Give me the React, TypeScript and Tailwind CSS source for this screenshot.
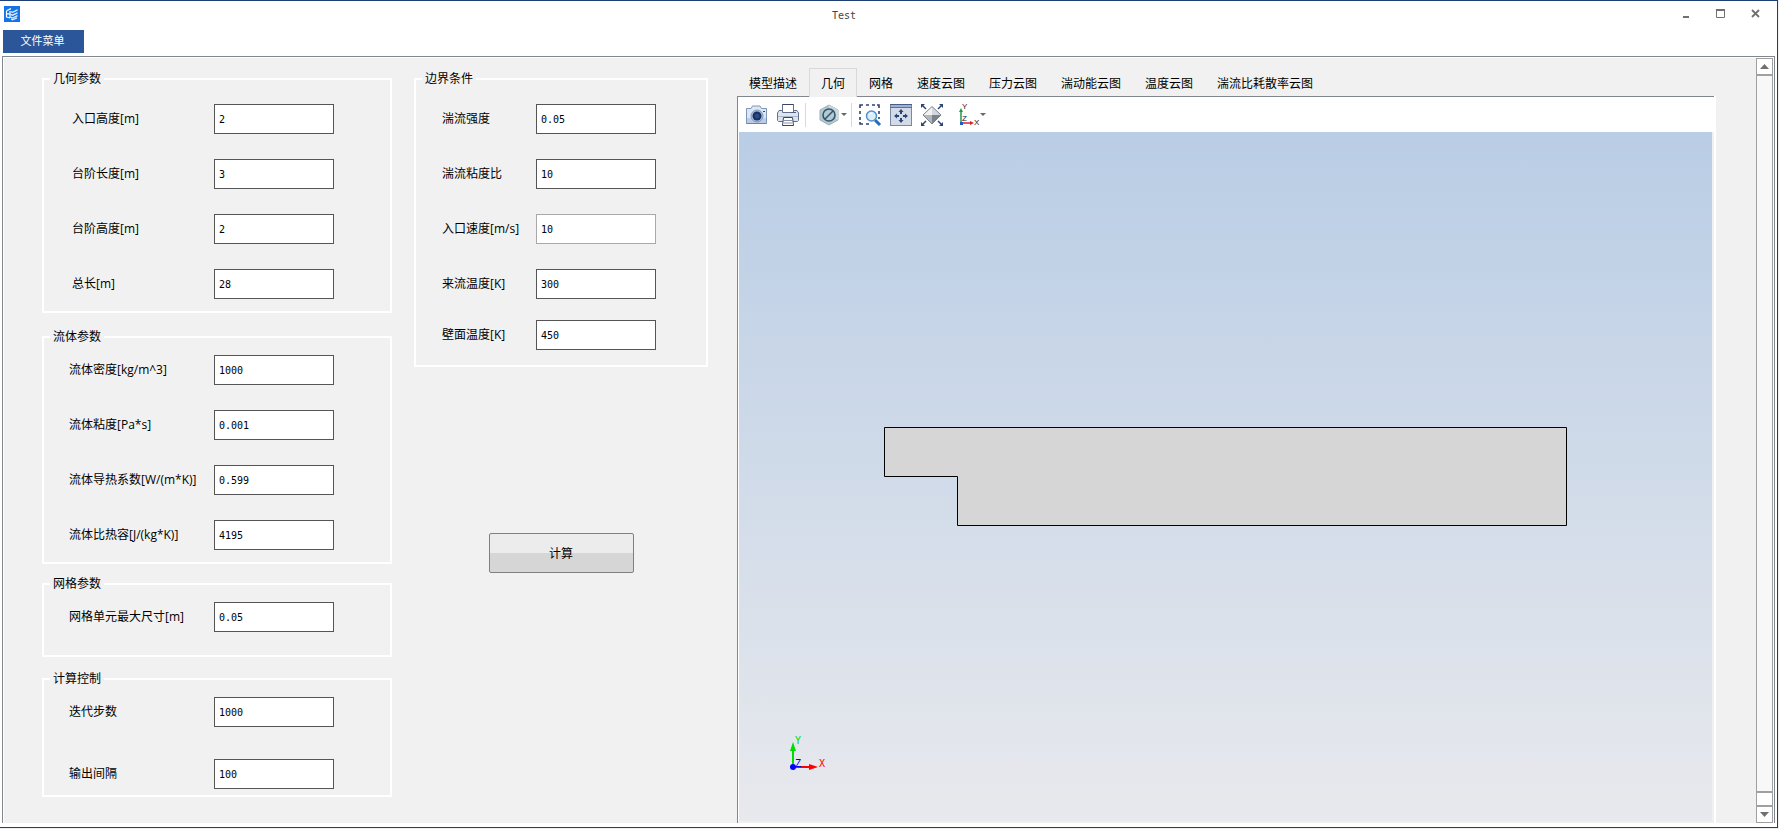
import { useState } from 'react';
import clsx from 'clsx';

type Field = { id: string; label: string; value: string; readOnly?: boolean };

const geometry: Field[] = [
  { id: 'inlet-height', label: '入口高度[m]', value: '2' },
  { id: 'step-length', label: '台阶长度[m]', value: '3' },
  { id: 'step-height', label: '台阶高度[m]', value: '2' },
  { id: 'total-length', label: '总长[m]', value: '28' },
];

const fluid: Field[] = [
  { id: 'density', label: '流体密度[kg/m^3]', value: '1000' },
  { id: 'viscosity', label: '流体粘度[Pa*s]', value: '0.001' },
  { id: 'conductivity', label: '流体导热系数[W/(m*K)]', value: '0.599' },
  { id: 'heat-capacity', label: '流体比热容[J/(kg*K)]', value: '4195' },
];

const mesh: Field[] = [{ id: 'mesh-size', label: '网格单元最大尺寸[m]', value: '0.05' }];

const control: Field[] = [
  { id: 'iterations', label: '迭代步数', value: '1000' },
  { id: 'interval', label: '输出间隔', value: '100' },
];

const flow: Field[] = [
  { id: 'intensity', label: '湍流强度', value: '0.05' },
  { id: 'viscosity-ratio', label: '湍流粘度比', value: '10' },
  { id: 'inlet-speed', label: '入口速度[m/s]', value: '10', readOnly: true },
  { id: 'inflow-temp', label: '来流温度[K]', value: '300' },
];

const wall: Field[] = [{ id: 'wall-temp', label: '壁面温度[K]', value: '450' }];

const tabs = ['模型描述', '几何', '网格', '速度云图', '压力云图', '湍动能云图', '温度云图', '湍流比耗散率云图'];

function Rows({ fields, className }: { fields: Field[]; className?: string }) {
  return (
    <div className={clsx('flex flex-col', className)}>
      {fields.map((f) => (
        <div key={f.id} className="flex items-center">
          <label htmlFor={f.id} className="flex-1 whitespace-nowrap">
            {f.label}
          </label>
          <input
            id={f.id}
            type="text"
            defaultValue={f.value}
            readOnly={f.readOnly}
            className={clsx(
              'h-[30px] w-[120px] border bg-white px-1 font-["DejaVu_Sans_Mono",monospace] text-[10px] outline-none',
              f.readOnly ? 'border-[#a9a9a9]' : 'border-[#555555]'
            )}
          />
        </div>
      ))}
    </div>
  );
}

type GroupProps = { title: string; className?: string; bodyClassName?: string; children: React.ReactNode };

function Group({ title, className, bodyClassName, children }: GroupProps) {
  return (
    <fieldset className={clsx('border-2 border-white', className)}>
      <legend className="ml-1.5 px-[3px] leading-4">{title}</legend>
      <div className={bodyClassName}>{children}</div>
    </fieldset>
  );
}

function AppLogo() {
  return (
    <svg width="16" height="16" viewBox="0 0 16 16" fill="none">
      <rect width="16" height="16" fill="#1473e6" />
      <path d="M2.5 5v6.5M2.5 4.8 7 2.6M2.5 7.8h3.5M2.5 11l3.5 1M6 5v7" stroke="#fff" strokeWidth="1.2" />
      <path d="M6.5 5.6 8.5 6.3 13.5 3.9M6.5 8.4l2 .8 5-2.4M6.5 11.2l2 .8 5-2.4M7 13l1.5.8 4.5-2" stroke="#dcebff" strokeWidth="1.3" />
    </svg>
  );
}

function CameraIcon() {
  return (
    <svg width="24" height="24" viewBox="0 0 24 24">
      <path d="M1.5 5.5H6L7.5 3H15l1.5 2.5h5v15h-20z" fill="#dbe7f5" stroke="#7f95b8" strokeLinejoin="round" />
      <path d="M2 15h19v5H2z" fill="#b9cde8" />
      <path d="M1.5 20.5h20" stroke="#6c84ab" />
      <circle cx="12" cy="13" r="6" fill="#aebfda" stroke="#8296b8" />
      <circle cx="12" cy="13" r="4.5" fill="#172f63" />
      <circle cx="12" cy="13" r="2.5" fill="#294a82" />
      <rect x="18" y="8" width="2" height="1" fill="#2f4a78" />
    </svg>
  );
}

function PrinterIcon() {
  return (
    <svg width="24" height="24" viewBox="0 0 24 24" stroke="#62718c">
      <path d="M6.5 9V1.5h11V9" fill="#fff" />
      <path d="M6.5 1.5h11" stroke="#354664" />
      <path d="M1.5 10 3 7.500h3.500v2h11v-2H21l1.500 2.500v7.500l-1 1h-19l-1-1z" fill="#dfe5ef" />
      <path d="M2 13.5h20" stroke="#aab5c8" />
      <path d="M15 9.5h5" stroke="#4f6080" />
      <path d="M7.5 14.5h9l1 8h-11z" fill="#fff" stroke="#354664" />
      <path d="M8 17.5h8M8 20h8" stroke="#8592a9" />
    </svg>
  );
}

function HiddenIcon() {
  return (
    <svg width="20" height="24" viewBox="0 0 20 24">
      <path d="m10 2 9 5v10l-9 5-9-5V7z" fill="#b4c8cd" stroke="#9ab1b9" />
      <path d="m10 2 9 5v10l-9-5z" fill="#cbd9dd" />
      <circle cx="10" cy="12" r="6" fill="#b3cad2" stroke="#34566f" strokeWidth="1.6" />
      <path d="m6 16 8-8" stroke="#34566f" strokeWidth="1.6" />
    </svg>
  );
}

function ZoomBoxIcon() {
  return (
    <svg width="24" height="24" viewBox="0 0 24 24" fill="none">
      <path d="M2 5V2h3M8 2h3M14 2h3M19 2h2v3M21 8v3M21 14v2M2 8v3M2 14v3M2 19v2h3M8 21h3" stroke="#2b4474" strokeWidth="1.6" />
      <path d="m17 17 5 5" stroke="#1f6fc0" strokeWidth="3" />
      <circle cx="13.5" cy="13" r="5" fill="#d9effc" stroke="#5590c8" strokeWidth="1.5" />
      <path d="M11 12a3 3 0 0 1 3-2" stroke="#fff" />
    </svg>
  );
}

function FitIcon() {
  return (
    <svg width="24" height="24" viewBox="0 0 24 24">
      <rect x="1.5" y="1.5" width="21" height="21" fill="#d3dbe9" stroke="#7a88a3" />
      <path d="M1 1h22v1H1z" fill="#465d88" />
      <path d="M2 2h20v2H2z" fill="#9fb2d3" />
      <path d="M1 4h22v1H1z" fill="#5c7098" />
      <path
        d="m12 6 2.500 3H13v2h-2V9H9.500zM12 20l2.500-3H13v-2h-2v2H9.500zM5 13l3-2.500V12h2v2H8v1.500zM19 13l-3-2.500V12h-2v2h2v1.500z"
        fill="#2b4474"
      />
    </svg>
  );
}

function ExtentsIcon() {
  return (
    <svg width="24" height="24" viewBox="0 0 24 24">
      <path d="M12 3.500V12H3z" fill="#f2f2f2" />
      <path d="M12 3.500V12h9z" fill="#d4d7db" />
      <path d="M12 12v9l-9-9z" fill="#b3b7bd" />
      <path d="M12 12v9l9-9z" fill="#7d838c" />
      <path d="m12 3.500 9 8.500-9 9-9-9z" fill="none" stroke="#7b828c" />
      <path d="m2 2 4 4M22 2l-4 4M2 22l4-4M22 22l-4-4" stroke="#2b4474" strokeWidth="1.5" />
      <path d="M1 1h4L1 5zM23 1v4l-4-4zM1 23v-4l4 4zM23 23h-4l4-4z" fill="#2b4474" />
    </svg>
  );
}

function AxesIcon() {
  return (
    <svg width="24" height="24" viewBox="0 0 24 24" fontSize="8" fontFamily="Liberation Sans, sans-serif">
      <path d="M5 20V8" stroke="#1f9a4b" strokeWidth="1.5" />
      <path d="m5 5 2 4H3z" fill="#1f9a4b" />
      <path d="M5 20h10" stroke="#e0202a" strokeWidth="1.5" />
      <path d="m18 20-4-2v4z" fill="#e0202a" />
      <rect x="4" y="19" width="3" height="3" fill="#2456c8" />
      <text x="6" y="6" fill="#222">Y</text>
      <text x="6" y="18" fill="#222">Z</text>
      <text x="18" y="22" fill="#222">X</text>
    </svg>
  );
}

function Caret() {
  return (
    <svg width="6" height="4" viewBox="0 0 6 4">
      <path d="M0 0h6L3 3z" fill="#666" />
    </svg>
  );
}

function Toolbar() {
  return (
    <div className="flex h-[35px] items-center pl-[7px]">
      <button aria-label="截图">
        <CameraIcon />
      </button>
      <button aria-label="打印" className="ml-[7px]">
        <PrinterIcon />
      </button>
      <span className="ml-[5px] h-6 w-px bg-[#d9d9d9]" />
      <button aria-label="隐藏" className="ml-[13px] flex items-center gap-0.5">
        <HiddenIcon />
        <Caret />
      </button>
      <span className="ml-1 h-6 w-px bg-[#d9d9d9]" />
      <button aria-label="框选缩放" className="ml-1.5">
        <ZoomBoxIcon />
      </button>
      <button aria-label="适应窗口" className="ml-[7px]">
        <FitIcon />
      </button>
      <button aria-label="缩放到全部" className="ml-[7px]">
        <ExtentsIcon />
      </button>
      <button aria-label="视图方向" className="ml-3 flex items-center">
        <AxesIcon />
        <Caret />
      </button>
    </div>
  );
}

function Viewport() {
  return (
    <div className="relative flex-1 bg-linear-to-b from-[#b9cde5] to-[#e8e9ed]">
      <svg className="absolute inset-0 h-full w-full" viewBox="0 0 973 689">
        <path d="M145.5 295.5H827.5V393.5H218.5V344.5H145.5z" fill="#d6d6d6" stroke="#000" />
        <g fontSize="10" fontFamily="DejaVu Sans Mono, monospace">
          <path d="M54 635V616" stroke="#00dc00" strokeWidth="2" />
          <path d="m54 610 3 9h-6z" fill="#00dc00" />
          <path d="M54 635h20" stroke="#f00" strokeWidth="2" />
          <path d="m79 635-9-3v6z" fill="#f00" />
          <circle cx="54" cy="635" r="3" fill="#00f" />
          <text x="56" y="612" fill="#00dc00">Y</text>
          <text x="56" y="635" fill="#00f">Z</text>
          <text x="80" y="635" fill="#f00">X</text>
        </g>
      </svg>
    </div>
  );
}

function Scrollbar() {
  return (
    <div className="flex w-[17px] flex-col border border-[#a0a0a0] bg-[#f8f8f8]">
      <button aria-label="向上滚动" className="flex h-[17px] items-center justify-center border-b-2 border-[#a0a0a0] bg-white">
        <svg width="9" height="5" viewBox="0 0 9 5">
          <path d="M4.5 0 9 5H0z" fill="#707070" />
        </svg>
      </button>
      <div className="flex-1" />
      <div className="h-4 border-y-2 border-[#a0a0a0] bg-white" />
      <button aria-label="向下滚动" className="flex h-[15px] items-center justify-center bg-white">
        <svg width="9" height="5" viewBox="0 0 9 5">
          <path d="M0 0h9L4.5 5z" fill="#707070" />
        </svg>
      </button>
    </div>
  );
}

export default function App() {
  const [active, setActive] = useState('几何');

  return (
    <div className='flex min-h-screen bg-[#f0f0f0] pr-px pb-px font-["Open_Sans","Noto_Sans_CJK_SC",sans-serif] text-xs text-black'>
      <div className="flex flex-1 flex-col border-t border-r border-b border-[#1f3f73] bg-white">
        <header className="mb-1 flex h-[25px] items-center pr-1 pl-1">
          <AppLogo />
          <h1 className='flex-1 pt-1 text-center font-["DejaVu_Sans_Mono",monospace] text-[10px] text-[#444444]'>Test</h1>
          <button aria-label="最小化" className="flex w-[35px] justify-center">
            <svg width="10" height="10" viewBox="0 0 10 10">
              <path d="M2 7h6v2H2z" fill="#707070" />
            </svg>
          </button>
          <button aria-label="最大化" className="flex w-[35px] justify-center">
            <svg width="9" height="9" viewBox="0 0 9 9">
              <path d="M.5 1h8v7.500h-8z" fill="none" stroke="#707070" />
              <path d="M0 0h9v2H0z" fill="#707070" />
            </svg>
          </button>
          <button aria-label="关闭" className="flex w-[35px] justify-center">
            <svg width="9" height="9" viewBox="0 0 9 9">
              <path d="m1 1 7 7M8 1 1 8" stroke="#707070" strokeWidth="1.8" />
            </svg>
          </button>
        </header>

        <nav className="flex pl-[3px]">
          <button className="h-[23px] w-[81px] bg-[#2b579a] pr-0.5 pb-0.5 text-[11px] leading-4 text-white">文件菜单</button>
        </nav>

        <main className="mx-0.5 mt-[3px] mb-1 flex flex-1 border-x border-t border-[#82878f] bg-white px-px pt-px">
          <div className="flex flex-1 bg-[#f1f1f1] pl-[38px]">
            <div className="flex w-[350px] flex-col pt-[13px]">
              <Group title="几何参数" bodyClassName="pt-[17px] pr-14 pb-3 pl-7">
                <Rows fields={geometry} className="gap-[25px]" />
              </Group>
              <Group title="流体参数" className="mt-4" bodyClassName="pt-2.5 pr-14 pb-3 pl-[25px]">
                <Rows fields={fluid} className="gap-[25px]" />
              </Group>
              <Group title="网格参数" className="mt-3" bodyClassName="pt-2.5 pr-14 pb-[23px] pl-[25px]">
                <Rows fields={mesh} />
              </Group>
              <Group title="计算控制" className="mt-3.5" bodyClassName="pt-2.5 pr-14 pb-1.5 pl-[25px]">
                <Rows fields={control} className="gap-8" />
              </Group>
            </div>

            <div className="ml-[22px] flex w-[294px] flex-col pt-[13px]">
              <Group title="边界条件" bodyClassName="pt-[17px] pr-[50px] pb-[15px] pl-[26px]">
                <Rows fields={flow} className="gap-[25px]" />
                <Rows fields={wall} className="mt-[21px]" />
              </Group>
              <button className="mt-[166px] h-10 w-[145px] self-center rounded-xs border border-[#808080] bg-linear-to-b from-[#ececec] from-50% to-[#d6d6d6] to-50% pt-0.5">
                计算
              </button>
            </div>

            <section className="mr-10 ml-[29px] flex flex-1 flex-col pt-2.5">
              <div role="tablist" className="flex h-7">
                {tabs.map((tab) => (
                  <button
                    key={tab}
                    role="tab"
                    aria-selected={tab === active}
                    onClick={() => setActive(tab)}
                    className={clsx(
                      'h-[29px] px-3 pt-0.5 whitespace-nowrap',
                      tab === active && 'relative z-10 bg-[#f1f1f1] shadow-[inset_1px_1px_#d9d9d9,inset_-1px_0_#d9d9d9]'
                    )}
                  >
                    {tab}
                  </button>
                ))}
              </div>
              <div className="flex flex-1 border-r-2 border-white">
                <div className="flex flex-1 flex-col border-t border-l border-[#82878f] bg-white">
                  <Toolbar />
                  <div className="flex flex-1 border-r-2 border-b-2 border-[#f0f0f0] pl-px">
                    <Viewport />
                  </div>
                </div>
              </div>
            </section>

            <Scrollbar />
          </div>
        </main>
      </div>
    </div>
  );
}
